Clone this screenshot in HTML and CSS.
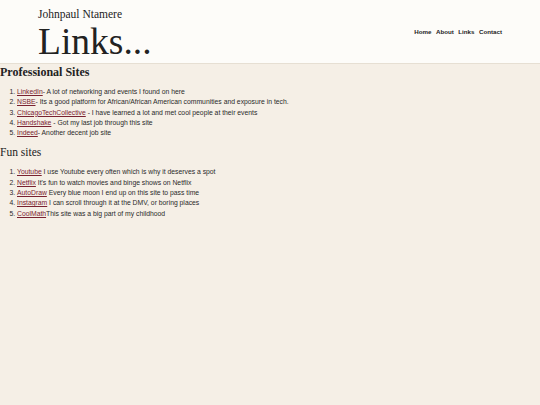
FILE: index.html
```html
<!DOCTYPE html>
<html>
<head>
<meta charset="utf-8">
<title>Links</title>
<link rel="stylesheet" href="styles.css">
</head>
<body>
<header class="site-header">
  <div class="brand">
    <div class="author">Johnpaul Ntamere</div>
    <div class="title">Links...</div>
  </div>
  <nav class="nav">
    <a href="#">Home</a>
    <a href="#">About</a>
    <a href="#">Links</a>
    <a href="#">Contact</a>
  </nav>
</header>
<main class="content">
  <h2 class="section-title bold">Professional Sites</h2>
  <ol class="link-list">
    <li><a href="#">LinkedIn</a>- A lot of networking and events I found on here</li>
    <li><a href="#">NSBE</a>- Its a good platform for African/African American communities and exposure in tech.</li>
    <li><a href="#">ChicagoTechCollective</a> - I have learned a lot and met cool people at their events</li>
    <li><a href="#">Handshake</a> - Got my last job through this site</li>
    <li><a href="#">Indeed</a>- Another decent job site</li>
  </ol>
  <h2 class="section-title">Fun sites</h2>
  <ol class="link-list">
    <li><a href="#">Youtube</a> I use Youtube every often which is why it deserves a spot</li>
    <li><a href="#">Netflix</a> It's fun to watch movies and binge shows on Netflix</li>
    <li><a href="#">AutoDraw</a> Every blue moon I end up on this site to pass time</li>
    <li><a href="#">Instagram</a> I can scroll through it at the DMV, or boring places</li>
    <li><a href="#">CoolMath</a>This site was a big part of my childhood</li>
  </ol>
</main>
</body>
</html>
```
FILE: styles.css
```css
html, body {
  margin: 0;
  padding: 0;
  background: #f5efe6;
  height: 100%;
}
body {
  font-family: "Liberation Sans", Arial, sans-serif;
  color: #222;
}
.site-header {
  background: #fdfcf9;
  border-bottom: 1px solid #e6dfd3;
  height: 63px;
  display: flex;
  align-items: center;
  justify-content: space-between;
  padding: 0 38px;
  box-sizing: content-box;
}
.brand {
  color: #222;
  align-self: flex-start;
  padding-top: 7.5px;
}
.author {
  font-family: "Liberation Serif", Georgia, serif;
  font-size: 11.5px;
  line-height: 12px;
}
.title {
  font-family: "Liberation Serif", Georgia, serif;
  font-size: 37.5px;
  line-height: 43px;
}
.nav {
  display: flex;
  gap: 4.5px;
}
.nav a {
  font-family: "Liberation Sans", Arial, sans-serif;
  font-size: 6.2px;
  font-weight: bold;
  color: #222;
  text-decoration: none;
}
.content {
  padding: 0;
}
.section-title {
  font-family: "Liberation Serif", Georgia, serif;
  font-size: 11.5px;
  font-weight: normal;
  margin: 0;
  line-height: 14px;
  color: #222;
}
.section-title.bold {
  font-weight: bold;
  font-size: 12px;
  margin-top: 1px;
}
.link-list {
  margin: 8px 0 7px 0;
  padding-left: 17px;
  font-size: 6.8px;
  line-height: 10.3px;
  color: #2a2a2a;
}
.link-list a {
  color: #7a2230;
  text-decoration: underline;
  text-decoration-color: #7a2230;
}
```
